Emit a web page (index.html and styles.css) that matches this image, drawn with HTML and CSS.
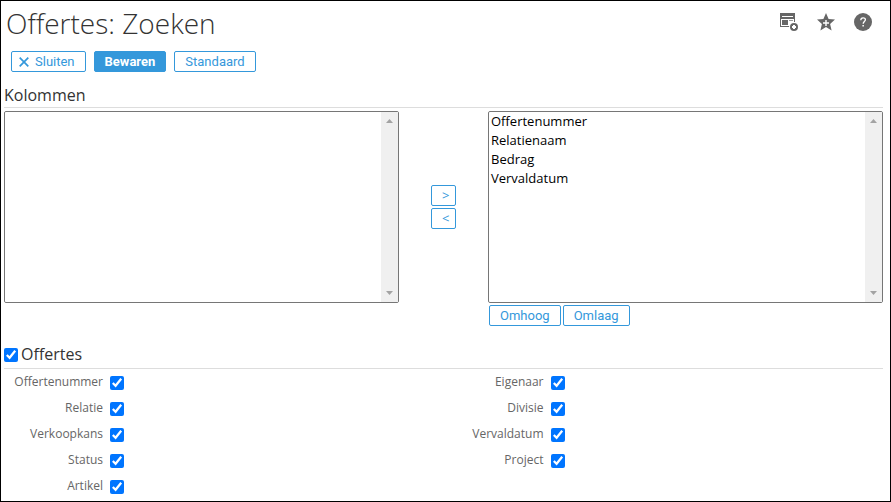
FILE: index.html
```html
<!DOCTYPE html>
<html lang="nl">
<head>
    <meta charset="UTF-8">
    <meta name="viewport" content="width=device-width, initial-scale=1.0">
    <title>Offertes: Zoeken</title>
    <link rel="stylesheet" href="styles.css">
</head>
<body>

    <!-- Header -->
    <header class="header">
        <h1>Offertes: Zoeken</h1>
        <nav class="tools">
            <a href="#" aria-label="Toevoegen aan menu">
                <svg width="20" height="20" viewBox="0 0 20 20">
                    <path fill="#666" d="M1 1h15v9h-1V7H2v7h9v1H1z"/>
                    <path fill="#fff" d="M3 4h11v1H3z"/>
                    <path fill="#666" d="M3 8h6v5H3z"/>
                    <path fill="#999" d="M10 8h4v1h-4z"/>
                    <circle cx="15" cy="15" r="5" fill="#fff"/>
                    <circle cx="15" cy="15" r="4" fill="#666"/>
                    <path fill="#fff" d="M14 13h2v1h1v2h-1v1h-2v-1h-1v-2h1z"/>
                </svg>
            </a>
            <a href="#" aria-label="Favoriet">
                <svg width="20" height="20" viewBox="0 0 20 20">
                    <path fill="#666" d="M10 1l2.600 6 6.400.6-4.900 4.300 1.500 6.600L10 15l-5.600 3.500 1.500-6.600L1 7.600 7.400 7z"/>
                    <path fill="#fff" d="M9.300 8h1.400v2.300H13v1.400h-2.300V14H9.300v-2.300H7v-1.400h2.300z"/>
                </svg>
            </a>
            <a href="#" aria-label="Help">
                <svg width="20" height="20" viewBox="0 0 20 20">
                    <circle cx="10" cy="10" r="9" fill="#666"/>
                    <path fill="none" stroke="#fff" stroke-width="1.300" d="M7.800 8.200c0-3 4.600-3 4.600-.4 0 1.700-2.200 1.900-2.200 4"/>
                    <path fill="#fff" d="M9.400 13h1.500v1.500H9.400z"/>
                </svg>
            </a>
        </nav>
    </header>

    <!-- Buttons -->
    <div class="toolbar">
        <button type="button" class="btn btn-close">
            <svg width="10" height="10" viewBox="0 0 10 10"><path d="M.7.7l8.600 8.600M9.300.7L.7 9.300" stroke="#3498db" stroke-width="1.700"/></svg>
            Sluiten
        </button>
        <button type="button" class="btn btn-primary">Bewaren</button>
        <button type="button" class="btn">Standaard</button>
    </div>

    <!-- Columns -->
    <section class="columns">
        <h2>Kolommen</h2>
        <div class="picker">
            <div class="listbox">
                <select id="available" multiple aria-label="Beschikbare kolommen"></select>
                <div class="scrollbar">
                    <svg width="7" height="4" viewBox="0 0 7 4"><path d="M0 4L3.500 0 7 4z"/></svg>
                    <svg width="7" height="4" viewBox="0 0 7 4"><path d="M0 0l3.500 4L7 0z"/></svg>
                </div>
            </div>
            <div class="move">
                <button type="button" class="btn btn-move" onclick="moveItems('available', 'selected')">&gt;</button>
                <button type="button" class="btn btn-move" onclick="moveItems('selected', 'available')">&lt;</button>
            </div>
            <div class="listbox">
                <select id="selected" multiple aria-label="Gekozen kolommen">
                    <option>Offertenummer</option>
                    <option>Relatienaam</option>
                    <option>Bedrag</option>
                    <option>Vervaldatum</option>
                </select>
                <div class="scrollbar">
                    <svg width="7" height="4" viewBox="0 0 7 4"><path d="M0 4L3.500 0 7 4z"/></svg>
                    <svg width="7" height="4" viewBox="0 0 7 4"><path d="M0 0l3.500 4L7 0z"/></svg>
                </div>
            </div>
            <div class="order">
                <button type="button" class="btn">Omhoog</button>
                <button type="button" class="btn">Omlaag</button>
            </div>
        </div>
    </section>

    <!-- Search fields -->
    <section class="fields">
        <h2><input type="checkbox" id="all" checked><label for="all">Offertes</label></h2>
        <div class="field-grid">
            <div class="field-col">
                <div class="field"><label for="nummer">Offertenummer</label><input type="checkbox" id="nummer" checked></div>
                <div class="field"><label for="relatie">Relatie</label><input type="checkbox" id="relatie" checked></div>
                <div class="field"><label for="kans">Verkoopkans</label><input type="checkbox" id="kans" checked></div>
                <div class="field"><label for="status">Status</label><input type="checkbox" id="status" checked></div>
                <div class="field"><label for="artikel">Artikel</label><input type="checkbox" id="artikel" checked></div>
            </div>
            <div class="field-col">
                <div class="field"><label for="eigenaar">Eigenaar</label><input type="checkbox" id="eigenaar" checked></div>
                <div class="field"><label for="divisie">Divisie</label><input type="checkbox" id="divisie" checked></div>
                <div class="field"><label for="verval">Vervaldatum</label><input type="checkbox" id="verval" checked></div>
                <div class="field"><label for="project">Project</label><input type="checkbox" id="project" checked></div>
            </div>
        </div>
    </section>

    <script>
        function moveItems(from, to) {
            const target = document.getElementById(to);
            Array.from(document.getElementById(from).selectedOptions).forEach((option) => {
                target.appendChild(option);
            });
        }
    </script>

</body>
</html>
```
FILE: styles.css
```css
* {
    box-sizing: border-box;
}

body {
    font-family: "Open Sans", sans-serif;
    margin: 0;
    padding: 0 7px 0 3px;
    min-height: 100vh;
    border: 1px solid #000;
    background-color: #fff;
    color: #333;
}

.header {
    display: flex;
    justify-content: space-between;
    align-items: flex-start;
    height: 50px;
    padding-left: 2px;
}

h1 {
    margin: 0;
    font-size: 28px;
    font-weight: 300;
    line-height: 44px;
}

.tools {
    display: flex;
    gap: 17px;
    padding: 11px 10px 0 0;
}

.tools svg {
    display: block;
}

.toolbar {
    display: flex;
    gap: 8px;
    padding-left: 7px;
}

.btn {
    height: 21px;
    padding: 0 10px;
    border: 1px solid #3498db;
    border-radius: 2px;
    background-color: #fff;
    color: #3498db;
    font-family: Roboto, sans-serif;
    font-size: 13px;
    line-height: 19px;
    cursor: pointer;
}

.btn-close {
    display: flex;
    align-items: center;
    gap: 6px;
    padding: 0 10px 0 7px;
}

.btn-primary {
    background-color: #3498db;
    color: #fff;
    font-weight: 700;
}

h2 {
    display: flex;
    align-items: center;
    margin: 0;
    border-bottom: 1px solid #ddd;
    font-size: 16px;
    font-weight: 400;
    line-height: 24px;
}

.columns {
    margin-top: 11px;
}

.picker {
    display: grid;
    grid-template-columns: 1fr 89px 1fr;
    margin-top: 3px;
}

.listbox {
    display: flex;
    height: 192px;
    border: 1px solid #767676;
    border-radius: 2px;
}

.listbox select {
    flex: 1;
    min-width: 0;
    height: 100%;
    padding: 0;
    border: 0;
    outline: 0;
    background-color: #fff;
    color: #000;
    font-family: "Open Sans", sans-serif;
    font-size: 13px;
    scrollbar-width: none;
}

.listbox option {
    min-height: 19px;
    padding: 0 2px;
    line-height: 19px;
}

.scrollbar {
    display: flex;
    flex-direction: column;
    justify-content: space-between;
    align-items: center;
    width: 17px;
    padding: 7px 0;
    background-color: #f0f0f0;
}

.scrollbar svg {
    fill: #a3a3a3;
}

.move {
    display: flex;
    flex-direction: column;
    justify-content: center;
    align-items: center;
    gap: 2px;
}

.btn-move {
    width: 25px;
    font-family: "Open Sans", sans-serif;
}

.order {
    grid-column: 3;
    display: flex;
    gap: 2px;
    padding: 2px 1px;
}

.fields {
    margin-top: 14px;
}

.fields h2 {
    gap: 3px;
    padding-bottom: 2px;
}

input[type="checkbox"] {
    width: 14px;
    height: 14px;
    margin: 2px 0 0;
    accent-color: #0075ff;
}

.field-grid {
    display: grid;
    grid-template-columns: 1fr 1fr;
    column-gap: 2px;
}

.field {
    display: flex;
    align-items: center;
    gap: 7px;
    height: 26px;
}

.field label {
    width: 99px;
    color: #666;
    font-size: 12px;
    line-height: 18px;
    text-align: right;
}
```
